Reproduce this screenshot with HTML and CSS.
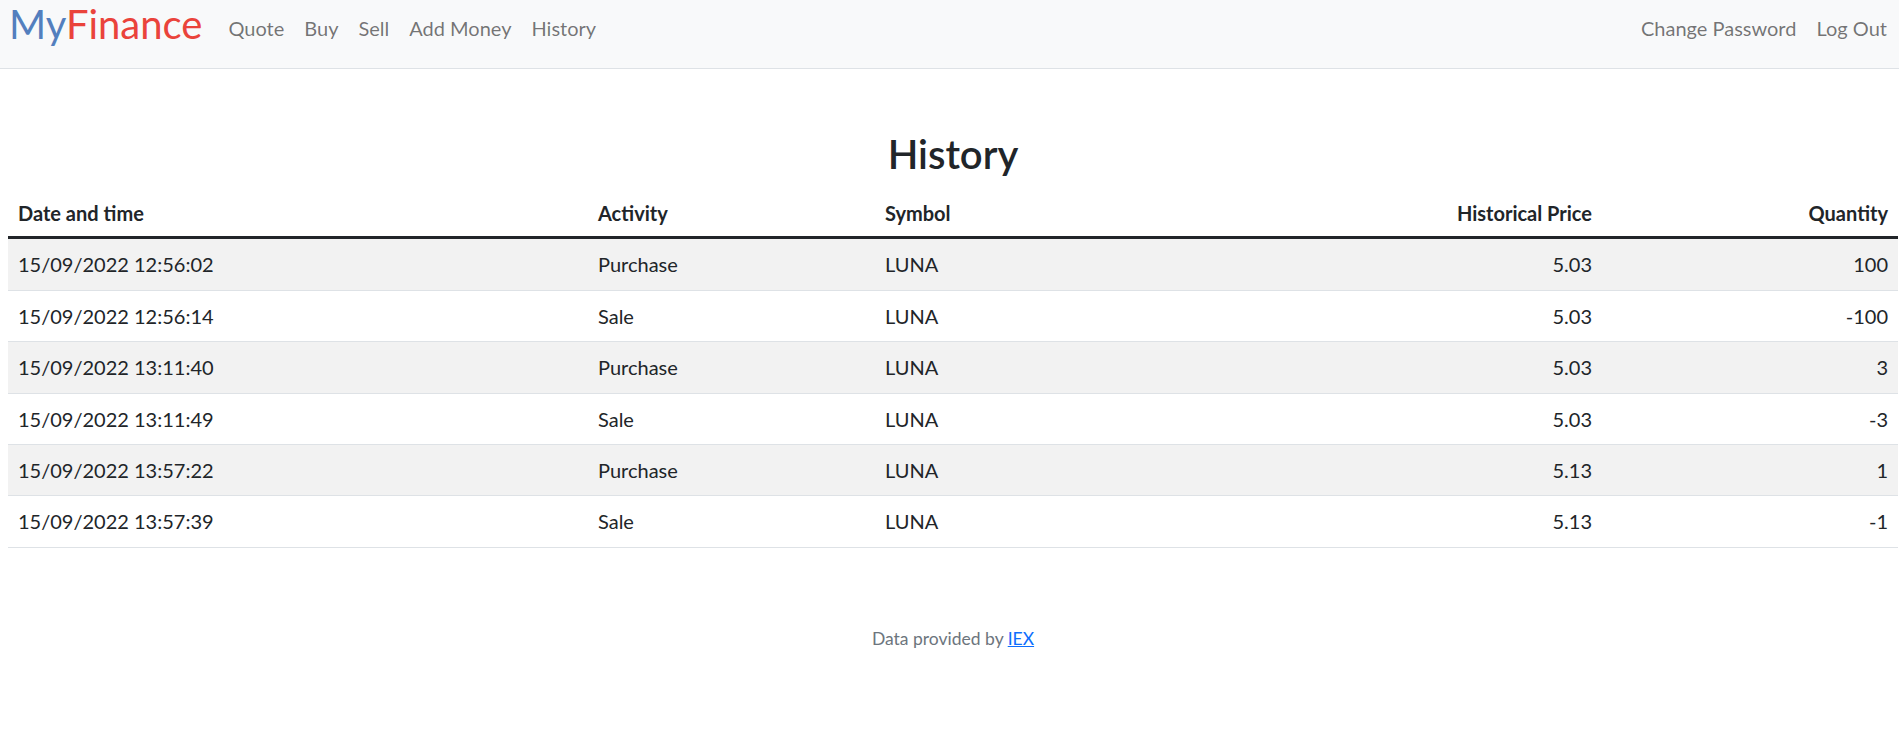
FILE: index.html
```html
<!DOCTYPE html>
<html lang="en">
<head>
<meta charset="utf-8">
<title>MyFinance: History</title>
<link rel="stylesheet" href="styles.css">
</head>
<body>
<nav class="navbar">
  <a class="brand" href="#"><span class="blue">My</span><span class="red">Finance</span></a>
  <ul class="nav-list">
    <li><a class="nav-link" href="#">Quote</a></li>
    <li><a class="nav-link" href="#">Buy</a></li>
    <li><a class="nav-link" href="#">Sell</a></li>
    <li><a class="nav-link" href="#">Add Money</a></li>
    <li><a class="nav-link" href="#">History</a></li>
  </ul>
  <ul class="nav-list nav-right">
    <li><a class="nav-link" href="#">Change Password</a></li>
    <li><a class="nav-link" href="#">Log Out</a></li>
  </ul>
</nav>
<main class="main">
  <h1 class="title">History</h1>
  <table class="history">
    <thead>
      <tr>
        <th class="c-date">Date and time</th>
        <th class="c-act">Activity</th>
        <th class="c-sym">Symbol</th>
        <th class="c-price end">Historical Price</th>
        <th class="c-qty end">Quantity</th>
      </tr>
    </thead>
    <tbody>
      <tr><td>15/09/2022 12:56:02</td><td>Purchase</td><td>LUNA</td><td class="end">5.03</td><td class="end">100</td></tr>
      <tr><td>15/09/2022 12:56:14</td><td>Sale</td><td>LUNA</td><td class="end">5.03</td><td class="end">-100</td></tr>
      <tr><td>15/09/2022 13:11:40</td><td>Purchase</td><td>LUNA</td><td class="end">5.03</td><td class="end">3</td></tr>
      <tr><td>15/09/2022 13:11:49</td><td>Sale</td><td>LUNA</td><td class="end">5.03</td><td class="end">-3</td></tr>
      <tr><td>15/09/2022 13:57:22</td><td>Purchase</td><td>LUNA</td><td class="end">5.13</td><td class="end">1</td></tr>
      <tr><td>15/09/2022 13:57:39</td><td>Sale</td><td>LUNA</td><td class="end">5.13</td><td class="end">-1</td></tr>
    </tbody>
  </table>
</main>
<footer class="footer">
  Data provided by <a class="footer-link" href="#">IEX</a>
</footer>
</body>
</html>
```
FILE: styles.css
```css
html, body {
  margin: 0;
  padding: 0;
}
body {
  font-family: Lato, "Open Sans", sans-serif;
  font-size: 20px;
  line-height: 1.5;
  color: #212529;
  background: #fff;
}
.navbar {
  display: flex;
  align-items: flex-start;
  height: 69px;
  box-sizing: border-box;
  padding: 0 2px 0 9px;
  background: #f8f9fa;
  border-bottom: 1px solid #dee2e6;
}
.brand {
  font-size: 40px;
  line-height: 48px;
  text-decoration: none;
  margin-right: 16px;
}
.blue { color: #537fbe; }
.red { color: #ea433b; }
.nav-list {
  list-style: none;
  display: flex;
  margin: 13px 0 0 0;
  padding: 0;
}
.nav-right {
  margin-left: auto;
}
.nav-link {
  display: block;
  padding: 0 10px;
  line-height: 30px;
  color: rgba(0, 0, 0, 0.55);
  text-decoration: none;
}
.main {
  padding: 61px 1px 58px 8px;
}
.title {
  margin: 0 0 10px;
  font-size: 40px;
  line-height: 48px;
  font-weight: 600;
  text-align: center;
}
.history {
  width: 100%;
  border-collapse: collapse;
  margin-bottom: 20px;
}
.history th,
.history td {
  padding: 10px;
  text-align: left;
  line-height: 30.4px;
}
.history th {
  padding-bottom: 8px;
  font-weight: 700;
  border-bottom: 3px solid #212529;
}
.history td {
  border-bottom: 1px solid #dee2e6;
}
.history tbody tr:nth-child(odd) td {
  background: #f2f2f2;
}
.history .end {
  text-align: right;
}
.c-date { width: 560px; }
.c-act { width: 267px; }
.c-sym { width: 343px; }
.c-price { width: 344px; }
.footer {
  text-align: center;
  font-size: 17.5px;
  color: #6c757d;
  padding: 0 1px 0 8px;
  margin-bottom: 60px;
}
.footer-link {
  color: #0d6efd;
  text-decoration: underline;
}
```
